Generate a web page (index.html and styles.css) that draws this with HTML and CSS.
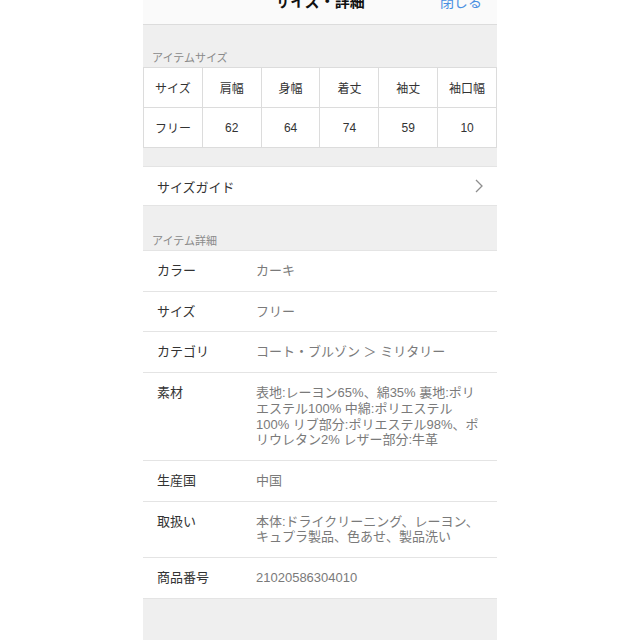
FILE: index.html
```html
<!DOCTYPE html>
<html lang="ja">
<head>
    <meta charset="UTF-8">
    <meta name="viewport" content="width=device-width, initial-scale=1.0">
    <title>サイズ・詳細</title>
    <link rel="stylesheet" href="styles.css">
</head>
<body>
    <div class="screen">
        <div class="nav">
            <div class="nav-title">サイズ・詳細</div>
            <div class="nav-close">閉じる</div>
        </div>

        <div class="section-label">アイテムサイズ</div>
        <table class="size-table">
            <tr>
                <td>サイズ</td>
                <td>肩幅</td>
                <td>身幅</td>
                <td>着丈</td>
                <td>袖丈</td>
                <td>袖口幅</td>
            </tr>
            <tr>
                <td>フリー</td>
                <td>62</td>
                <td>64</td>
                <td>74</td>
                <td>59</td>
                <td>10</td>
            </tr>
        </table>

        <div class="spacer"></div>
        <div class="guide-row">
            <span>サイズガイド</span>
            <svg class="chevron" width="10" height="16" viewBox="0 0 10 16">
                <polyline points="2,2 8,8 2,14" fill="none" stroke="#8e8e8e" stroke-width="1.3"/>
            </svg>
        </div>

        <div class="section-label tall">アイテム詳細</div>
        <div class="details">
            <div class="detail-row">
                <div class="detail-key">カラー</div>
                <div class="detail-value">カーキ</div>
            </div>
            <div class="detail-row">
                <div class="detail-key">サイズ</div>
                <div class="detail-value">フリー</div>
            </div>
            <div class="detail-row">
                <div class="detail-key">カテゴリ</div>
                <div class="detail-value">コート・ブルゾン ＞ ミリタリー</div>
            </div>
            <div class="detail-row">
                <div class="detail-key">素材</div>
                <div class="detail-value">表地:レーヨン65%、綿35% 裏地:ポリエステル100% 中綿:ポリエステル100% リブ部分:ポリエステル98%、ポリウレタン2% レザー部分:牛革</div>
            </div>
            <div class="detail-row">
                <div class="detail-key">生産国</div>
                <div class="detail-value">中国</div>
            </div>
            <div class="detail-row">
                <div class="detail-key">取扱い</div>
                <div class="detail-value">本体:ドライクリーニング、レーヨン、キュプラ製品、色あせ、製品洗い</div>
            </div>
            <div class="detail-row">
                <div class="detail-key">商品番号</div>
                <div class="detail-value">21020586304010</div>
            </div>
        </div>
    </div>
</body>
</html>
```

FILE: styles.css
```css
body {
    font-family: "Liberation Sans", "Noto Sans CJK JP", sans-serif;
    color: #333333;
    background-color: #ffffff;
    margin: 0;
    padding: 0;
    overflow: hidden;
}
.screen {
    width: 354px;
    margin: 0 auto;
    background-color: #efefef;
    height: 660px;
}
.nav {
    height: 44px;
    margin-top: -20px;
    background-color: #fafafa;
    border-bottom: 1px solid #dcdcdc;
    position: relative;
    text-align: center;
}
.nav-title {
    font-size: 15px;
    font-weight: bold;
    line-height: 44px;
    color: #111111;
}
.nav-close {
    position: absolute;
    right: 15px;
    top: 0;
    line-height: 44px;
    font-size: 14px;
    color: #4a90e2;
}
.section-label {
    font-size: 11px;
    line-height: 14px;
    color: #8a8a8a;
    padding: 26px 9px 2px;
}
.section-label.tall {
    padding-top: 28px;
}
.size-table {
    width: 100%;
    border-collapse: collapse;
    background-color: #ffffff;
    table-layout: fixed;
}
.size-table td {
    border: 1px solid #dcdcdc;
    height: 39px;
    padding: 0;
    text-align: center;
    font-size: 12px;
    color: #333333;
}
.spacer {
    height: 18px;
}
.guide-row {
    display: flex;
    align-items: center;
    justify-content: space-between;
    height: 38px;
    padding: 0 13px 0 14px;
    background-color: #ffffff;
    border-top: 1px solid #e4e4e4;
    border-bottom: 1px solid #e4e4e4;
    font-size: 13px;
}
.details {
    background-color: #ffffff;
    border-top: 1px solid #e4e4e4;
}
.detail-row {
    display: flex;
    padding: 12px 12px 12px 14px;
    border-bottom: 1px solid #e4e4e4;
    font-size: 13px;
    line-height: 15.7px;
}
.detail-key {
    width: 99px;
    flex-shrink: 0;
    color: #333333;
}
.detail-value {
    color: #7a7a7a;
    flex: 1;
}
```
